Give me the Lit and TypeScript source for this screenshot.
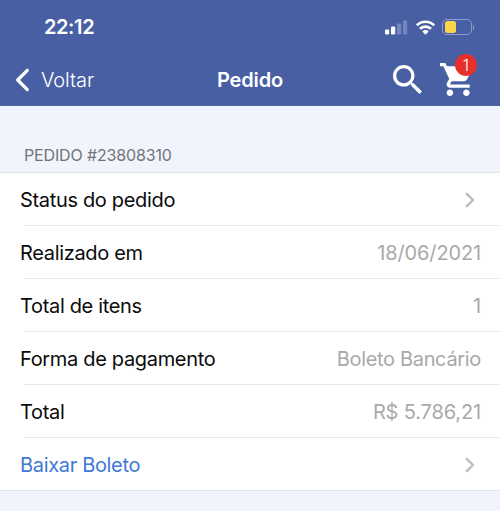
import {css, html, LitElement, nothing, svg} from 'lit';
import {customElement, property} from 'lit/decorators.js';
import {classMap} from 'lit/directives/class-map.js';

interface OrderRow {
  label: string;
  value?: string;
  numeric?: boolean;
  link?: boolean;
  chevron?: boolean;
}

const SIGNAL_BARS = [
  { x: 0, height: 5, on: true },
  { x: 6, height: 8, on: true },
  { x: 12, height: 11, on: false },
  { x: 18, height: 14, on: false },
];

@customElement('status-bar')
export class StatusBar extends LitElement {
  @property({ type: String }) time = '';
  @property({ type: Number }) battery = 40;

  static styles = css`
    :host {
      display: flex;
      justify-content: space-between;
      align-items: center;
      height: 54px;
      box-sizing: border-box;
      padding: 0 26px 0 44px;
      color: #fff;
    }

    .time {
      font-size: 20px;
      font-weight: 600;
      letter-spacing: -0.4px;
    }

    .indicators {
      display: flex;
      align-items: center;
    }

    .wifi {
      margin-left: 8px;
    }

    .battery {
      display: flex;
      box-sizing: border-box;
      width: 30px;
      height: 16px;
      margin-left: 7px;
      padding: 1px;
      border: 1px solid #8d9cca;
      border-radius: 5px;
    }

    .battery-level {
      margin-left: 1px;
      background: #fcd549;
      border-radius: 2.5px;
    }

    .battery-cap {
      width: 1px;
      height: 5px;
      margin-left: 1px;
      background: #8d9cca;
      border-radius: 0 2px 2px 0;
    }
  `;

  render() {
    return html`
      <span class="time">${this.time}</span>
      <div class="indicators">
        <svg width="23" height="15" viewBox="0 0 23 15">
          ${SIGNAL_BARS.map(
            (bar) => svg`<rect
              x=${bar.x} y=${14.5 - bar.height} width="4.2" height=${bar.height}
              rx="1.2" fill=${bar.on ? '#fff' : '#7687bd'}></rect>`
          )}
        </svg>
        <svg class="wifi" width="19" height="15" viewBox="0 0 19 15">
          <g fill="none" stroke="#fff" stroke-width="2.7">
            <path d="M0.9 5.3a12.2 12.2 0 0 1 17.2 0"></path>
            <path d="M4 8.8a7.8 7.8 0 0 1 11 0"></path>
          </g>
          <path d="M6.3 11.4a4.5 4.5 0 0 1 6.4 0L9.5 14.8z" fill="#fff"></path>
        </svg>
        <div class="battery">
          <div class="battery-level" style="width: ${this.battery}%"></div>
        </div>
        <div class="battery-cap"></div>
      </div>
    `;
  }
}

@customElement('nav-bar')
export class NavBar extends LitElement {
  @property({ type: String }) heading = '';
  @property({ type: Number }) cartCount = 0;

  static styles = css`
    :host {
      display: grid;
      grid-template-columns: 1fr auto 1fr;
      align-items: center;
      height: 51px;
      box-sizing: border-box;
      padding: 0 27px 0 15px;
      color: #fff;
      font-size: 20px;
    }

    .back {
      display: flex;
      align-items: center;
      gap: 11px;
      font-weight: 300;
      letter-spacing: -0.1px;
    }

    .heading {
      margin-left: 12px;
      font-weight: 600;
      letter-spacing: -0.15px;
    }

    .actions {
      display: flex;
      justify-content: flex-end;
      align-items: center;
      gap: 18px;
    }

    svg {
      display: block;
    }

    .cart {
      position: relative;
      margin-bottom: 1px;
    }

    .badge {
      position: absolute;
      top: -9px;
      right: -4px;
      width: 22px;
      height: 22px;
      border-radius: 50%;
      background: #e7302a;
      font-size: 16px;
      font-weight: 300;
      line-height: 22px;
      text-align: center;
    }
  `;

  render() {
    return html`
      <div class="back">
        <svg width="15" height="24" viewBox="0 0 15 24">
          <path d="M12.3 2.3 2.7 12l9.6 9.7" fill="none" stroke="#fff"
            stroke-width="3.2" stroke-linecap="round" stroke-linejoin="round"></path>
        </svg>
        <span>Voltar</span>
      </div>
      <div class="heading">${this.heading}</div>
      <div class="actions">
        <svg width="29" height="29" viewBox="3 3 17.5 17.5" fill="#fff">
          <path d="M15.5 14h-.79l-.28-.27A6.47 6.47 0 0 0 16 9.5 6.5 6.5 0 1 0 9.5 16c1.61 0 3.09-.59 4.23-1.57l.27.28v.79l5 4.99L20.49 19l-4.99-5zm-6 0C7.01 14 5 11.99 5 9.5S7.01 5 9.5 5 14 7.01 14 9.5 11.99 14 9.5 14z"></path>
        </svg>
        <div class="cart">
          <svg width="33" height="33" viewBox="1 2 20 20" fill="#fff">
            <path d="M7 18c-1.1 0-1.99.9-1.99 2S5.9 22 7 22s2-.9 2-2-.9-2-2-2zM1 2v2h2l3.6 7.59-1.35 2.45c-.16.28-.25.61-.25.96 0 1.1.9 2 2 2h12v-2H7.42c-.14 0-.25-.11-.25-.25l.03-.12.9-1.63h7.45c.75 0 1.41-.41 1.75-1.03l3.58-6.49A1 1 0 0 0 20 4H5.21l-.94-2H1zm16 16c-1.1 0-1.99.9-1.99 2s.89 2 1.99 2 2-.9 2-2-.9-2-2-2z"></path>
          </svg>
          ${this.cartCount > 0
            ? html`<span class="badge">${this.cartCount}</span>`
            : nothing}
        </div>
      </div>
    `;
  }
}

@customElement('order-list')
export class OrderList extends LitElement {
  @property({ type: String }) caption = '';
  @property({ attribute: false }) rows: OrderRow[] = [];

  static styles = css`
    :host {
      display: block;
    }

    .caption {
      height: 66px;
      box-sizing: border-box;
      padding: 39px 24px 0;
      color: #737478;
      font-size: 16px;
      line-height: 20px;
      letter-spacing: -0.15px;
    }

    .rows {
      background: #fff;
      border-top: 1px solid #e3e4ea;
      border-bottom: 1px solid #dfe2ea;
    }

    .row {
      display: flex;
      justify-content: space-between;
      align-items: center;
      height: 52px;
      padding: 2px 19px 0 20px;
      box-sizing: border-box;
      font-size: 20px;
      letter-spacing: -0.33px;
      color: #0b0b0b;
    }

    .divider {
      height: 1px;
      margin-left: 24px;
      background: #e8e8ea;
    }

    .link {
      color: #3f78d6;
    }

    .value {
      color: #a9a9a9;
    }

    .numeric {
      letter-spacing: -0.14px;
    }

    .chevron {
      margin-right: 6px;
    }
  `;

  render() {
    return html`
      <div class="caption">${this.caption}</div>
      <div class="rows">
        ${this.rows.map(
          (row, i) => html`
            ${i > 0 ? html`<div class="divider"></div>` : nothing}
            <div class="row">
              <span class=${classMap({ label: true, link: !!row.link })}>${row.label}</span>
              ${row.value
                ? html`<span class=${classMap({ value: true, numeric: !!row.numeric })}>${row.value}</span>`
                : nothing}
              ${row.chevron ? this.renderChevron() : nothing}
            </div>
          `
        )}
      </div>
    `;
  }

  private renderChevron() {
    return html`
      <svg class="chevron" width="10" height="16" viewBox="0 0 10 16">
        <path d="M1.7 1.8 8 8l-6.3 6.2" fill="none" stroke="#bdbdbd"
          stroke-width="2.4" stroke-linecap="round" stroke-linejoin="round"></path>
      </svg>
    `;
  }
}

@customElement('app-root')
export class AppRoot extends LitElement {
  @property({ attribute: false }) rows: OrderRow[] = [
    { label: 'Status do pedido', chevron: true },
    { label: 'Realizado em', value: '18/06/2021', numeric: true },
    { label: 'Total de itens', value: '1', numeric: true },
    { label: 'Forma de pagamento', value: 'Boleto Bancário' },
    { label: 'Total', value: 'R$ 5.786,21', numeric: true },
    { label: 'Baixar Boleto', link: true, chevron: true },
  ];

  static styles = css`
    :host {
      display: block;
      min-height: 100vh;
      background: #f1f4fd;
      font-family: Inter, 'Liberation Sans', sans-serif;
    }

    header {
      background: #485fa4;
      border-bottom: 1px solid #52659c;
    }
  `;

  render() {
    return html`
      <header>
        <status-bar time="22:12" battery="42"></status-bar>
        <nav-bar heading="Pedido" .cartCount=${1}></nav-bar>
      </header>
      <order-list caption="PEDIDO #23808310" .rows=${this.rows}></order-list>
    `;
  }
}

declare global {
  interface HTMLElementTagNameMap {
    'app-root': AppRoot;
    'status-bar': StatusBar;
    'nav-bar': NavBar;
    'order-list': OrderList;
  }
}
